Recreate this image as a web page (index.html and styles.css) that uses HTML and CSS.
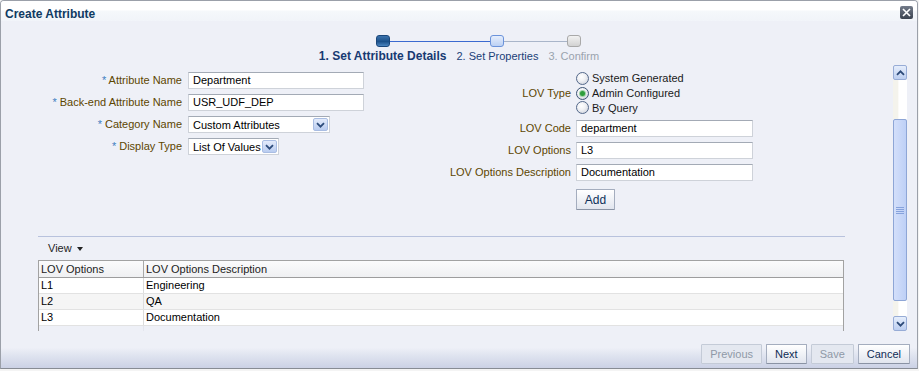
FILE: index.html
```html
<!DOCTYPE html>
<html>
<head>
<meta charset="utf-8">
<title>Create Attribute</title>
<link rel="stylesheet" href="styles.css">
</head>
<body>
<div class="dialog">
  <div class="titlebar">
    <span class="title">Create Attribute</span>
    <span class="close"><svg width="9" height="9" viewBox="0 0 9 9"><path d="M1 1L8 8M8 1L1 8" stroke="#fff" stroke-width="1.6" fill="none"/></svg></span>
  </div>

  <div class="train">
    <div class="step current">
      <div class="track"><span class="seg"></span><span class="node node-current"></span><span class="seg seg-blue"></span></div>
      <div class="step-label">1. Set Attribute Details</div>
    </div>
    <div class="step">
      <div class="track"><span class="seg seg-blue"></span><span class="node node-next"></span><span class="seg seg-grey"></span></div>
      <div class="step-label">2. Set Properties</div>
    </div>
    <div class="step disabled">
      <div class="track"><span class="seg seg-grey"></span><span class="node node-off"></span><span class="seg"></span></div>
      <div class="step-label">3. Confirm</div>
    </div>
  </div>

  <div class="main">
    <div class="content">
      <div class="forms">
        <div class="form form-left">
          <span class="label"><span class="req">*</span> Attribute Name</span>
          <span class="input input-long">Department</span>
          <span class="label"><span class="req">*</span> Back-end Attribute Name</span>
          <span class="input input-long">USR_UDF_DEP</span>
          <span class="label"><span class="req">*</span> Category Name</span>
          <span class="select select-cat">Custom Attributes<span class="select-btn"><svg width="9" height="6" viewBox="0 0 9 6"><path d="M1 1.2L4.5 4.7L8 1.2" fill="none" stroke="#2d4c7c" stroke-width="1.8"/></svg></span></span>
          <span class="label"><span class="req">*</span> Display Type</span>
          <span class="select select-disp">List Of Values<span class="select-btn"><svg width="9" height="6" viewBox="0 0 9 6"><path d="M1 1.2L4.5 4.7L8 1.2" fill="none" stroke="#2d4c7c" stroke-width="1.8"/></svg></span></span>
        </div>
        <div class="form form-right">
          <span class="label">LOV Type</span>
          <div class="radio-group">
            <div class="radio-item"><span class="radio"></span>System Generated</div>
            <div class="radio-item"><span class="radio radio-on"><span class="dot"></span></span>Admin Configured</div>
            <div class="radio-item"><span class="radio"></span>By Query</div>
          </div>
          <span class="label">LOV Code</span>
          <span class="input input-lov">department</span>
          <span class="label">LOV Options</span>
          <span class="input input-lov">L3</span>
          <span class="label">LOV Options Description</span>
          <span class="input input-lov">Documentation</span>
          <span></span>
          <button class="btn btn-add">Add</button>
        </div>
      </div>

      <div class="separator"></div>
      <div class="toolbar">View<span class="caret"></span></div>

      <div class="table">
        <div class="thead">
          <span class="cell">LOV Options</span>
          <span class="cell">LOV Options Description</span>
        </div>
        <div class="row">
          <span class="cell">L1</span>
          <span class="cell">Engineering</span>
        </div>
        <div class="row row-alt">
          <span class="cell">L2</span>
          <span class="cell">QA</span>
        </div>
        <div class="row">
          <span class="cell">L3</span>
          <span class="cell">Documentation</span>
        </div>
        <div class="table-rest"><span class="cell"></span><span class="cell"></span></div>
      </div>
    </div>

    <div class="scrollbar">
      <span class="sb-btn"><svg width="9" height="6" viewBox="0 0 9 6"><path d="M1 4.8L4.5 1.3L8 4.8" fill="none" stroke="#2d4a78" stroke-width="1.8"/></svg></span>
      <span class="sb-track sb-track-top"></span>
      <span class="sb-thumb"><svg width="8" height="8" viewBox="0 0 8 8"><path d="M0 1.5H8M0 3.5H8M0 5.5H8M0 7.5H8" stroke="#86a2dc" stroke-width="1"/></svg></span>
      <span class="sb-track sb-track-bottom"></span>
      <span class="sb-btn"><svg width="9" height="6" viewBox="0 0 9 6"><path d="M1 1.2L4.5 4.7L8 1.2" fill="none" stroke="#2d4a78" stroke-width="1.8"/></svg></span>
    </div>
  </div>

  <div class="footer">
    <button class="btn btn-disabled">Previous</button>
    <button class="btn">Next</button>
    <button class="btn btn-disabled">Save</button>
    <button class="btn">Cancel</button>
  </div>
</div>
</body>
</html>
```

FILE: styles.css
```css
* { box-sizing: border-box; }

html, body {
  margin: 0;
  padding: 0;
}

body {
  width: 919px;
  height: 371px;
  overflow: hidden;
  background: #f4f4f4;
  font-family: "Liberation Sans", Arial, sans-serif;
  font-size: 11px;
  color: #000;
}

.dialog {
  width: 918px;
  height: 369px;
  border: 1px solid #9ba0a9;
  border-bottom-color: #878c94;
  border-radius: 4px 4px 0 0;
  background: #eef0f7;
  display: flex;
  flex-direction: column;
  overflow: hidden;
}

/* title bar */
.titlebar {
  height: 20px;
  flex: none;
  display: flex;
  justify-content: space-between;
  align-items: flex-start;
  background: linear-gradient(#ffffff 0, #ffffff 45%, #f5f8fb 50%, #f1f4f9 100%);
}

.title {
  padding: 6px 0 0 4px;
  font-size: 12px;
  font-weight: bold;
  line-height: 14px;
  color: #0f3a62;
}

.close {
  margin: 5px 4px 0 0;
  width: 13px;
  height: 13px;
  border-radius: 2px;
  background: linear-gradient(#747c8a, #3a424f);
  display: flex;
  align-items: center;
  justify-content: center;
}

/* train */
.train {
  height: 44px;
  flex: none;
  display: flex;
  justify-content: center;
  padding-top: 14px;
}

.step {
  display: flex;
  flex-direction: column;
}

.track {
  display: flex;
  align-items: center;
  height: 12px;
}

.seg {
  flex: 1;
  height: 1px;
}

.seg-blue { background: #3b6ad0; }
.seg-grey { background: #a9b5c9; }

.node {
  flex: none;
  width: 14px;
  height: 12px;
  border-radius: 3px;
  border: 1px solid #a8a8a8;
}

.node-current {
  border-color: #1a477b;
  background: linear-gradient(#3a72ad, #1c5189 55%, #4c86c0);
}

.node-next {
  border-color: #6b93db;
  background: linear-gradient(#e6eefc, #bcd1f4);
}

.node-off {
  border-color: #a9a9a9;
  background: linear-gradient(#f2f2f2, #d2d2d2);
}

.step-label {
  margin-top: 2px;
  padding: 0 5px;
  line-height: 15px;
  white-space: nowrap;
  color: #1b3f78;
}

.step.current .step-label {
  font-size: 12px;
  font-weight: bold;
  color: #173a72;
}

.step.disabled .step-label {
  color: #9aa3ae;
}

/* main scrolling area */
.main {
  height: 266px;
  flex: none;
  display: flex;
}

.content {
  flex: 1;
  overflow: hidden;
  padding-top: 6px;
}

.forms {
  display: flex;
  align-items: flex-start;
}

.form {
  display: grid;
  row-gap: 5px;
  align-items: center;
  justify-items: start;
}

.form-left {
  width: 390px;
  padding-top: 1px;
  grid-template-columns: 181px auto;
  column-gap: 6px;
}

.form-right {
  grid-template-columns: 180px auto;
  column-gap: 5px;
}

.label {
  justify-self: end;
  line-height: 17px;
  white-space: nowrap;
  color: #5d4600;
}

.req {
  color: #3f7fc1;
}

.input {
  display: block;
  height: 17px;
  padding: 0 4px;
  line-height: 15px;
  border: 1px solid #ced2d9;
  border-top-color: #a3aab5;
  background: #fff;
  white-space: nowrap;
}

.input-long { width: 176px; }
.input-lov { width: 177px; }

.select {
  height: 17px;
  display: flex;
  align-items: center;
  justify-content: space-between;
  padding-left: 4px;
  border: 1px solid #ced2d9;
  border-top-color: #a3aab5;
  background: #fff;
  white-space: nowrap;
}

.select-cat { width: 142px; }
.select-disp { width: 91px; }

.select-btn {
  width: 15px;
  height: 13px;
  margin-right: 1px;
  border: 1px solid #a9bde3;
  border-radius: 2px;
  background: linear-gradient(#e3ebfb, #b9ccf0);
  display: flex;
  align-items: center;
  justify-content: center;
}

.radio-group {
  height: 44px;
  display: flex;
  flex-direction: column;
}

.radio-item {
  height: 15px;
  display: flex;
  align-items: center;
  gap: 3px;
  white-space: nowrap;
  color: #1a1a1a;
}

.radio {
  width: 13px;
  height: 13px;
  flex: none;
  border-radius: 50%;
  border: 1px solid #53688a;
  background: radial-gradient(circle at 40% 35%, #ffffff 0, #f1f2f5 40%, #c6cbd6 100%);
  display: flex;
  align-items: center;
  justify-content: center;
}

.radio-on {
  border-color: #3d5475;
}

.dot {
  width: 5px;
  height: 5px;
  border-radius: 50%;
  background: #2f9e3c;
  box-shadow: 0 0 0 1px #9fd3a6;
}

/* buttons */
.btn {
  height: 20px;
  padding: 0 8px;
  margin: 0;
  font-family: "Liberation Sans", Arial, sans-serif;
  font-size: 11px;
  line-height: 18px;
  color: #0f2c55;
  border: 1px solid #a4adbe;
  border-bottom-color: #8a93a4;
  border-radius: 1px;
  background: linear-gradient(#ffffff, #e1e5ee);
}

.btn-disabled {
  color: #8f99a7;
  border-color: #c4cbd7;
  background: #e4e8f0;
}

.btn-add {
  margin-top: 3px;
  width: 39px;
  height: 21px;
  padding: 0;
  font-size: 12px;
  color: #0e3059;
}

/* table section */
.separator {
  margin: 26px 0 0 37px;
  width: 807px;
  height: 1px;
  background: #b8c2dd;
}

.toolbar {
  height: 23px;
  padding: 4px 0 0 47px;
  line-height: 15px;
  color: #1e1e1e;
}

.caret {
  display: inline-block;
  margin-left: 5px;
  vertical-align: middle;
  border-left: 3px solid transparent;
  border-right: 3px solid transparent;
  border-top: 4px solid #222;
}

.table {
  margin-left: 37px;
  width: 806px;
  height: 80px;
  border: 1px solid #a2a2a2;
  border-bottom: none;
  display: flex;
  flex-direction: column;
}

.thead,
.row,
.table-rest {
  display: grid;
  grid-template-columns: 105px 1fr;
}

.cell {
  padding-left: 2px;
  white-space: nowrap;
}

.cell:first-child {
  border-right: 1px solid #dcdcdc;
}

.thead {
  height: 17px;
  line-height: 16px;
  color: #222;
  border-bottom: 1px solid #9d9d9d;
  background: linear-gradient(#fbfbfc, #eff0f2);
}

.thead .cell:first-child {
  border-right-color: #a8a8a8;
}

.row {
  height: 16px;
  line-height: 15px;
  background: #fff;
  border-bottom: 1px solid #e2e2e2;
}

.row-alt {
  background: #f5f5f5;
}

.table-rest {
  flex: 1;
}

.table-rest .cell:first-child {
  border-right-color: #e4e6ee;
}

/* scrollbar */
.scrollbar {
  width: 14px;
  margin-right: 10px;
  display: flex;
  flex-direction: column;
}

.sb-btn {
  height: 15px;
  flex: none;
  border: 1px solid #97acd6;
  border-radius: 2px;
  background: linear-gradient(#e6eefc, #bccef0);
  display: flex;
  align-items: center;
  justify-content: center;
}

.sb-track {
  flex: none;
  background: linear-gradient(to right, #f4f3ec 0, #f4f3ec 38%, #ffffff 40%);
}

.sb-track-top { height: 39px; }
.sb-track-bottom { height: 15px; }

.sb-thumb {
  height: 182px;
  flex: none;
  border: 1px solid #8ea6d6;
  border-radius: 2px;
  background: linear-gradient(to right, #d3dffa, #bed0f6);
  display: flex;
  align-items: center;
  justify-content: center;
}

/* footer */
.footer {
  height: 37px;
  flex: none;
  display: flex;
  justify-content: flex-end;
  align-items: flex-start;
  gap: 4px;
  padding: 13px 7px 0 0;
  background: linear-gradient(#eef0f7 0, #eef0f7 45%, #e2e6f1 62%, #cbd1e5 100%);
}
```
